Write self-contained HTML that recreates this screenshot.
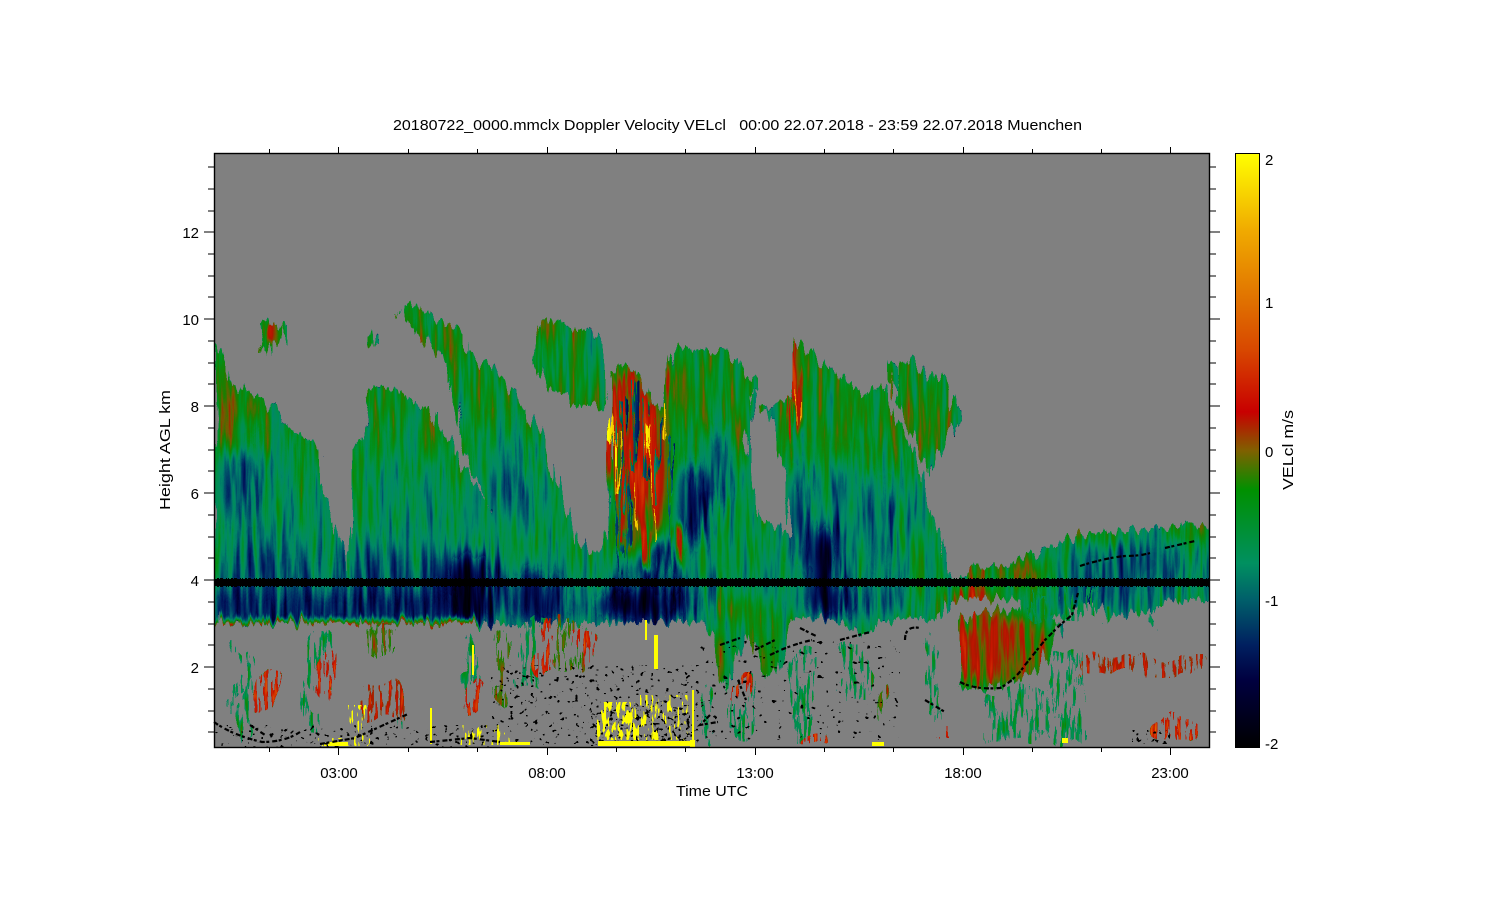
<!DOCTYPE html>
<html><head><meta charset="utf-8"><title>20180722_0000.mmclx Doppler Velocity VELcl</title>
<style>html,body{margin:0;padding:0;background:#fff}svg{display:block}text{font-family:"Liberation Sans",sans-serif;font-size:15px;fill:#000}.s rect{rx:7px;ry:18px}</style></head>
<body>
<svg xmlns="http://www.w3.org/2000/svg" width="1500" height="900" viewBox="0 0 1500 900">
<defs>
<linearGradient id="cb" x1="0" y1="0" x2="0" y2="1">
<stop offset="0" stop-color="#ffff00"/><stop offset=".13" stop-color="#f0aa00"/><stop offset=".25" stop-color="#e07000"/><stop offset=".33" stop-color="#d84800"/><stop offset=".435" stop-color="#c80000"/><stop offset=".5" stop-color="#806000"/><stop offset=".566" stop-color="#009000"/><stop offset=".69" stop-color="#009060"/><stop offset=".75" stop-color="#00606a"/><stop offset=".827" stop-color="#002060"/><stop offset=".886" stop-color="#000040"/><stop offset="1" stop-color="#000000"/>
</linearGradient>
<filter id="b3" x="-30%" y="-30%" width="160%" height="160%"><feGaussianBlur stdDeviation="3"/></filter>
<filter id="b8" x="-50%" y="-50%" width="200%" height="200%"><feGaussianBlur stdDeviation="8"/></filter>
<filter id="b14" x="-50%" y="-50%" width="200%" height="200%"><feGaussianBlur stdDeviation="14"/></filter>
<filter id="main" filterUnits="userSpaceOnUse" x="214" y="153" width="996" height="595" color-interpolation-filters="sRGB">
<feTurbulence type="fractalNoise" baseFrequency=".17 .013" numOctaves="3" seed="7" result="n"/>
<feColorMatrix in="n" type="matrix" values="1 0 0 0 0 1 0 0 0 0 1 0 0 0 0 0 0 0 0 1" result="g"/>
<feColorMatrix in="n" type="matrix" values="1 0 0 0 0 0 1 0 0 0 0 0 1 0 0 0 0 0 0 1" result="o"/>
<feDisplacementMap in="SourceGraphic" in2="o" scale="22" xChannelSelector="R" yChannelSelector="G" result="d"/>
<feComposite in="d" in2="g" operator="arithmetic" k1="0" k2="1" k3=".36" k4="-.18" result="a"/>
<feComposite in="a" in2="d" operator="in" result="b"/>
<feComponentTransfer in="b">
<feFuncR type="table" tableValues="0 0 0 0 0 0 0 0 0 .1 .45 .68 .78 .83 .86 .88 .91 .93 .95 .98 1"/>
<feFuncG type="table" tableValues="0 0 0 .07 .2 .38 .54 .565 .565 .5 .36 .09 .09 .23 .34 .44 .54 .63 .75 .87 1"/>
<feFuncB type="table" tableValues="0 .08 .22 .35 .4 .42 .4 .3 .1 0 0 0 0 0 0 0 0 0 0 0 0"/>
<feFuncA type="discrete" tableValues="0 1 1 1"/>
</feComponentTransfer>
</filter>
<filter id="sparse" filterUnits="userSpaceOnUse" x="214" y="153" width="996" height="595" color-interpolation-filters="sRGB">
<feTurbulence type="fractalNoise" baseFrequency=".28 .035" numOctaves="3" seed="21" result="n"/>
<feColorMatrix in="n" type="matrix" values="0 0 0 0 0 0 0 0 0 0 0 0 0 0 0 16 0 0 0 -8.3" result="m"/>
<feColorMatrix in="n" type="matrix" values="1 0 0 0 0 1 0 0 0 0 1 0 0 0 0 0 0 0 0 1" result="g"/>
<feTurbulence type="fractalNoise" baseFrequency=".04 .02" numOctaves="2" seed="3" result="n2"/>
<feColorMatrix in="n2" type="matrix" values="1 0 0 0 0 0 1 0 0 0 0 0 1 0 0 0 0 0 0 1" result="o"/>
<feDisplacementMap in="SourceGraphic" in2="o" scale="34" xChannelSelector="R" yChannelSelector="G" result="d"/>
<feComposite in="d" in2="g" operator="arithmetic" k1="0" k2="1" k3=".5" k4="-.25" result="a"/>
<feComposite in="a" in2="d" operator="in" result="c"/>
<feComposite in="c" in2="m" operator="in" result="b"/>
<feComponentTransfer in="b">
<feFuncR type="table" tableValues="0 0 0 0 0 0 0 0 0 .1 .45 .68 .78 .83 .86 .88 .91 .93 .95 .98 1"/>
<feFuncG type="table" tableValues="0 0 0 .07 .2 .38 .54 .565 .565 .5 .36 .09 .09 .23 .34 .44 .54 .63 .75 .87 1"/>
<feFuncB type="table" tableValues="0 .08 .22 .35 .4 .42 .4 .3 .1 0 0 0 0 0 0 0 0 0 0 0 0"/>
<feFuncA type="discrete" tableValues="0 1 1 1"/>
</feComponentTransfer>
</filter>
<filter id="specks" x="0" y="0" width="1" height="1" color-interpolation-filters="sRGB">
<feTurbulence type="fractalNoise" baseFrequency=".2 .24" numOctaves="2" seed="4"/>
<feColorMatrix type="matrix" values="0 0 0 0 0 0 0 0 0 0 0 0 0 0 0 40 0 0 0 -27"/>
</filter>
<filter id="specksRare" x="0" y="0" width="1" height="1" color-interpolation-filters="sRGB">
<feTurbulence type="fractalNoise" baseFrequency=".17 .2" numOctaves="2" seed="15"/>
<feColorMatrix type="matrix" values="0 0 0 0 0 0 0 0 0 0 0 0 0 0 0 40 0 0 0 -29"/>
</filter>
<filter id="specksDense" x="0" y="0" width="1" height="1" color-interpolation-filters="sRGB">
<feTurbulence type="fractalNoise" baseFrequency=".22 .26" numOctaves="2" seed="9"/>
<feColorMatrix type="matrix" values="0 0 0 0 0 0 0 0 0 0 0 0 0 0 0 40 0 0 0 -25"/>
</filter>
<filter id="yel" x="0" y="0" width="1" height="1" color-interpolation-filters="sRGB">
<feTurbulence type="fractalNoise" baseFrequency=".3 .08" numOctaves="2" seed="12"/>
<feColorMatrix type="matrix" values="0 0 0 0 1 0 0 0 0 1 0 0 0 0 0 40 0 0 0 -20.6"/>
</filter>
<filter id="yel2" x="0" y="0" width="1" height="1" color-interpolation-filters="sRGB">
<feTurbulence type="fractalNoise" baseFrequency=".35 .07" numOctaves="2" seed="31"/>
<feColorMatrix type="matrix" values="0 0 0 0 1 0 0 0 0 1 0 0 0 0 0 40 0 0 0 -24"/>
</filter>
<clipPath id="cl">
<path d="M214 345L222 355L230 382L240 388L258 398L270 403L278 418L290 430L310 438L320 443L322 490L332 520L340 540L350 575L352 450L360 435L365 420L367 392L380 385L395 388L420 410L432 408L442 430L458 455L472 482L490 510L470 470L458 430L452 395L445 365L425 340L400 312L405 305L415 303L432 318L445 323L465 333L465 348L480 360L490 368L507 383L515 393L530 418L545 438L550 468L560 488L570 518L580 545L592 555L603 548L607 490L612 430L612 370L625 362L640 375L650 400L662 410L668 350L690 345L700 350L730 352L745 370L752 400L745 440L750 470L760 515L785 535L790 530L785 470L775 440L760 410L775 405L790 395L797 338L815 355L835 375L865 393L885 385L895 410L908 440L920 470L925 500L940 530L946 570L950 580L975 570L1010 565L1040 550L1080 535L1130 530L1210 525L1210 598L1160 603L1150 615L1130 612L1110 618L1090 600L1065 612L1050 620L1020 612L1020 600L950 600L940 620L905 618L880 622L860 640L845 625L825 618L795 618L782 660L768 682L755 642L742 632L725 690L715 640L700 622L480 624L214 623Z"/>
<path d="M540 325L548 318L560 322L590 332L600 340L604 370L607 405L590 405L575 408L565 395L545 385L530 360Z"/>
<path d="M262 318L268 322L272 328L285 326L285 340L275 345L270 358L263 350Z"/>
<path d="M898 365L910 360L925 375L950 380L958 420L945 445L930 475L915 440L905 415L895 395Z"/>
<path d="M885 362L895 365L896 385L888 380Z"/>
<path d="M367 332L372 330L375 345L368 342Z"/>
<path d="M958 620L985 612L1040 608L1060 625L1045 660L1020 680L985 690L958 688L962 655Z"/>
<path d="M745 378L758 378L757 395L748 392Z"/>
</clipPath>
</defs>
<rect width="1500" height="900" fill="#fff"/>
<rect x="214" y="153" width="996" height="595" fill="#808080"/>
<g filter="url(#main)">
<g clip-path="url(#cl)">
<rect x="214" y="153" width="996" height="595" fill="#666666"/>
<g filter="url(#b14)">
<rect x="214" y="470" width="996" height="155" fill="#5a5a5a"/>
<ellipse cx="265" cy="500" rx="40" ry="50" fill="#4c4c4c"/>
<ellipse cx="400" cy="500" rx="45" ry="50" fill="#525252"/>
<ellipse cx="510" cy="470" rx="18" ry="50" fill="#404040"/>
<ellipse cx="850" cy="520" rx="40" ry="55" fill="#4c4c4c"/>
<rect x="214" y="545" width="270" height="85" fill="#404040"/>
<rect x="480" y="565" width="130" height="60" fill="#3e3e3e"/>
<rect x="640" y="570" width="70" height="55" fill="#303030"/>
<ellipse cx="1130" cy="565" rx="60" ry="32" fill="#3e3e3e"/>
<ellipse cx="860" cy="600" rx="50" ry="18" fill="#383838"/>
<ellipse cx="1100" cy="600" rx="55" ry="18" fill="#3e3e3e"/>
</g>
<g filter="url(#b8)">
<rect x="214" y="592" width="270" height="32" fill="#2c2c2c"/>
<ellipse cx="470" cy="590" rx="24" ry="38" fill="#101010"/>
<ellipse cx="540" cy="600" rx="25" ry="25" fill="#222222"/>
<ellipse cx="640" cy="605" rx="40" ry="20" fill="#181818"/>
<ellipse cx="645" cy="550" rx="25" ry="28" fill="#202020"/>
<ellipse cx="692" cy="505" rx="15" ry="42" fill="#202020"/>
<ellipse cx="718" cy="465" rx="9" ry="36" fill="#2e2e2e"/>
<ellipse cx="825" cy="565" rx="12" ry="42" fill="#101010"/>
<ellipse cx="800" cy="515" rx="7" ry="55" fill="#1e1e1e"/>
<ellipse cx="830" cy="600" rx="22" ry="18" fill="#181818"/>
<ellipse cx="880" cy="525" rx="8" ry="45" fill="#3a3a3a"/>
<ellipse cx="240" cy="485" rx="20" ry="36" fill="#3a3a3a"/>
<ellipse cx="1000" cy="650" rx="52" ry="36" fill="#8a8a8a"/>
<ellipse cx="975" cy="600" rx="26" ry="14" fill="#8c8c8c"/>
<ellipse cx="630" cy="440" rx="20" ry="75" fill="#969696"/>
<ellipse cx="655" cy="470" rx="12" ry="70" fill="#989898"/>
<ellipse cx="628" cy="530" rx="16" ry="30" fill="#868686"/>
<ellipse cx="675" cy="375" rx="10" ry="24" fill="#868686"/>
<ellipse cx="225" cy="410" rx="8" ry="42" fill="#7e7e7e"/>
<ellipse cx="250" cy="408" rx="18" ry="9" fill="#7c7c7c"/>
<ellipse cx="435" cy="345" rx="18" ry="20" fill="#767676"/>
<ellipse cx="540" cy="325" rx="10" ry="10" fill="#8a8a8a"/>
<ellipse cx="1010" cy="572" rx="40" ry="8" fill="#888888"/>
<ellipse cx="1100" cy="535" rx="30" ry="6" fill="#808080"/>
<ellipse cx="1190" cy="530" rx="24" ry="6" fill="#808080"/>
<ellipse cx="742" cy="610" rx="28" ry="10" fill="#747474"/>
</g>
<g filter="url(#b3)">
<ellipse cx="795" cy="395" rx="4" ry="42" fill="#b0b0b0"/>
<ellipse cx="273" cy="335" rx="5" ry="12" fill="#888888"/>
<rect x="214" y="621" width="266" height="6" fill="#a0a0a0"/>
<ellipse cx="648" cy="550" rx="3" ry="22" fill="#a8a8a8"/>
<ellipse cx="680" cy="545" rx="4" ry="20" fill="#a0a0a0"/>
</g>
<path d="M622 400V560M628 470V575M634 380V470M645 400V480M659 420V500M616 500V575M670 440V570" stroke="#3a3a3a" stroke-width="2.4" fill="none"/>
<path d="M650 430V500M619 430V495M664 405V440M613 415V445M795 390V425M636 480V530M655 500V540" stroke="#ececec" stroke-width="2" fill="none"/>
</g>
</g>
<g filter="url(#sparse)" class="s">
<g fill="#4c4c4c">
<rect x="228" y="640" width="10" height="70"/><rect x="310" y="625" width="18" height="60"/><rect x="238" y="650" width="14" height="90"/><rect x="300" y="685" width="12" height="50"/>
<rect x="465" y="640" width="12" height="60"/><rect x="520" y="625" width="30" height="60"/><rect x="700" y="690" width="14" height="50"/><rect x="730" y="680" width="24" height="60"/>
<rect x="790" y="650" width="22" height="90"/><rect x="840" y="640" width="28" height="60"/><rect x="925" y="640" width="14" height="90"/><rect x="990" y="690" width="60" height="50"/>
<rect x="1045" y="650" width="40" height="90"/><rect x="1010" y="680" width="22" height="50"/><rect x="385" y="690" width="18" height="48"/><rect x="1030" y="590" width="70" height="30"/><rect x="1152" y="620" width="4" height="14"/>
</g>
<g fill="#6a6a6a"><rect x="365" y="625" width="25" height="30"/><rect x="495" y="630" width="12" height="80"/><rect x="555" y="620" width="30" height="50"/><rect x="880" y="690" width="10" height="40"/></g>
<g fill="#808080">
<rect x="1078" y="657" width="132" height="20"/><rect x="365" y="682" width="45" height="44"/>
</g>
<g fill="#8c8c8c">
<rect x="254" y="670" width="22" height="40"/><rect x="322" y="650" width="14" height="60"/>
<rect x="468" y="680" width="14" height="30"/><rect x="535" y="625" width="22" height="50"/><rect x="578" y="630" width="14" height="35"/><rect x="728" y="680" width="22" height="20"/>
<rect x="1150" y="720" width="50" height="24"/><rect x="925" y="725" width="25" height="15"/><rect x="800" y="735" width="25" height="8"/>
</g>
</g>
<rect x="490" y="665" width="210" height="80" filter="url(#specks)"/>
<rect x="590" y="705" width="100" height="41" filter="url(#specksDense)"/>
<rect x="214" y="725" width="280" height="22" filter="url(#specks)"/>
<rect x="700" y="640" width="200" height="100" filter="url(#specksRare)"/>
<rect x="1130" y="730" width="40" height="14" filter="url(#specksDense)"/>
<rect x="597" y="702" width="42" height="38" filter="url(#yel)"/>
<rect x="640" y="695" width="50" height="45" filter="url(#yel2)"/>
<rect x="345" y="705" width="25" height="40" filter="url(#yel2)"/>
<rect x="460" y="725" width="50" height="20" filter="url(#yel2)"/>
<rect x="318" y="738" width="50" height="8" filter="url(#yel2)"/>
<g fill="#ffff00">
<rect x="598" y="741" width="92" height="5"/><rect x="654" y="635" width="4" height="34"/><rect x="645" y="620" width="2" height="20"/><rect x="692" y="690" width="2" height="50"/><rect x="690" y="740" width="5" height="7"/>
<rect x="430" y="708" width="2" height="36"/><rect x="472" y="645" width="2" height="30"/><rect x="328" y="742" width="20" height="4"/><rect x="872" y="742" width="12" height="4"/><rect x="1062" y="738" width="6" height="5"/><rect x="500" y="742" width="30" height="3"/>
</g>
<rect x="214" y="579" width="996" height="7" fill="#000"/>
<path d="M214 578.500H1210M214 586.500H1210" stroke="#000" stroke-width="1" stroke-dasharray="1 2 2 1 3 3 1 1" fill="none"/>
<g fill="none" stroke="#000" stroke-width="2.2" stroke-dasharray="5 1.500 3 3">
<path d="M214 722Q232 735 262 742Q285 742 300 732M250 725L265 735M320 744L355 738L408 714"/>
<path d="M430 742L470 738L500 742"/>
<path d="M770 655Q790 645 812 640M755 650L775 640M800 628L816 636M840 640L870 632M720 645L740 638M905 640Q905 625 920 628"/>
<path d="M960 682Q975 690 1000 688Q1015 680 1025 665L1045 640L1060 625L1072 615L1078 593"/>
<path d="M1080 566Q1105 558 1125 556Q1140 556 1150 553M1165 548L1195 541"/>
<path d="M710 715L700 725L718 722M738 680L746 700M925 700L945 712"/>
</g>
<g fill="none" stroke="#000">
<rect x="214.500" y="153.500" width="995" height="594" stroke-width="1.400"/>
<path d="M204 232H214M204 319H214M204 406H214M204 493H214M204 580H214M204 667H214M1210 232H1220M1210 319H1220M1210 406H1220M1210 493H1220M1210 580H1220M1210 667H1220"/>
<path d="M208 167H214M208 189H214M208 211H214M208 254H214M208 276H214M208 297H214M208 341H214M208 363H214M208 384H214M208 428H214M208 450H214M208 471H214M208 515H214M208 537H214M208 558H214M208 602H214M208 624H214M208 645H214M208 689H214M208 711H214M208 732H214"/>
<path d="M1210 167H1216M1210 189H1216M1210 211H1216M1210 254H1216M1210 276H1216M1210 297H1216M1210 341H1216M1210 363H1216M1210 384H1216M1210 428H1216M1210 450H1216M1210 471H1216M1210 515H1216M1210 537H1216M1210 558H1216M1210 602H1216M1210 624H1216M1210 645H1216M1210 689H1216M1210 711H1216M1210 732H1216"/>
<path d="M338.500 147V153M547.500 147V153M755.500 147V153M963.500 147V153M1170.500 147V153M338.500 748V755M547.500 748V755M755.500 748V755M963.500 748V755M1170.500 748V755"/>
<path d="M269.500 149V153M408.500 149V153M477.500 149V153M616.500 149V153M685.500 149V153M824.500 149V153M893.500 149V153M1032.500 149V153M1101.500 149V153M269.500 748V752M408.500 748V752M477.500 748V752M616.500 748V752M685.500 748V752M824.500 748V752M893.500 748V752M1032.500 748V752M1101.500 748V752"/>
</g>
<rect x="1235.500" y="153.500" width="24" height="594" fill="url(#cb)" stroke="#000"/>
<text x="393" y="130" textLength="689" lengthAdjust="spacingAndGlyphs" xml:space="preserve">20180722_0000.mmclx Doppler Velocity VELcl   00:00 22.07.2018 - 23:59 22.07.2018 Muenchen</text>
<g text-anchor="end">
<text x="199" y="238">12</text><text x="199" y="325">10</text><text x="199" y="412">8</text><text x="199" y="499">6</text><text x="199" y="586">4</text><text x="199" y="673">2</text>
</g>
<g text-anchor="middle">
<text x="339" y="778">03:00</text><text x="547" y="778">08:00</text><text x="755" y="778">13:00</text><text x="963" y="778">18:00</text><text x="1170" y="778">23:00</text>
</g>
<text x="676" y="796" textLength="72" lengthAdjust="spacingAndGlyphs">Time UTC</text>
<text transform="translate(170 510) rotate(-90)" textLength="120" lengthAdjust="spacingAndGlyphs">Height AGL km</text>
<text x="1265" y="165">2</text><text x="1265" y="308">1</text><text x="1265" y="457">0</text><text x="1265" y="606">-1</text><text x="1265" y="749">-2</text>
<text transform="translate(1293 490) rotate(-90)" textLength="80" lengthAdjust="spacingAndGlyphs">VELcl m/s</text>
</svg>
</body></html>
